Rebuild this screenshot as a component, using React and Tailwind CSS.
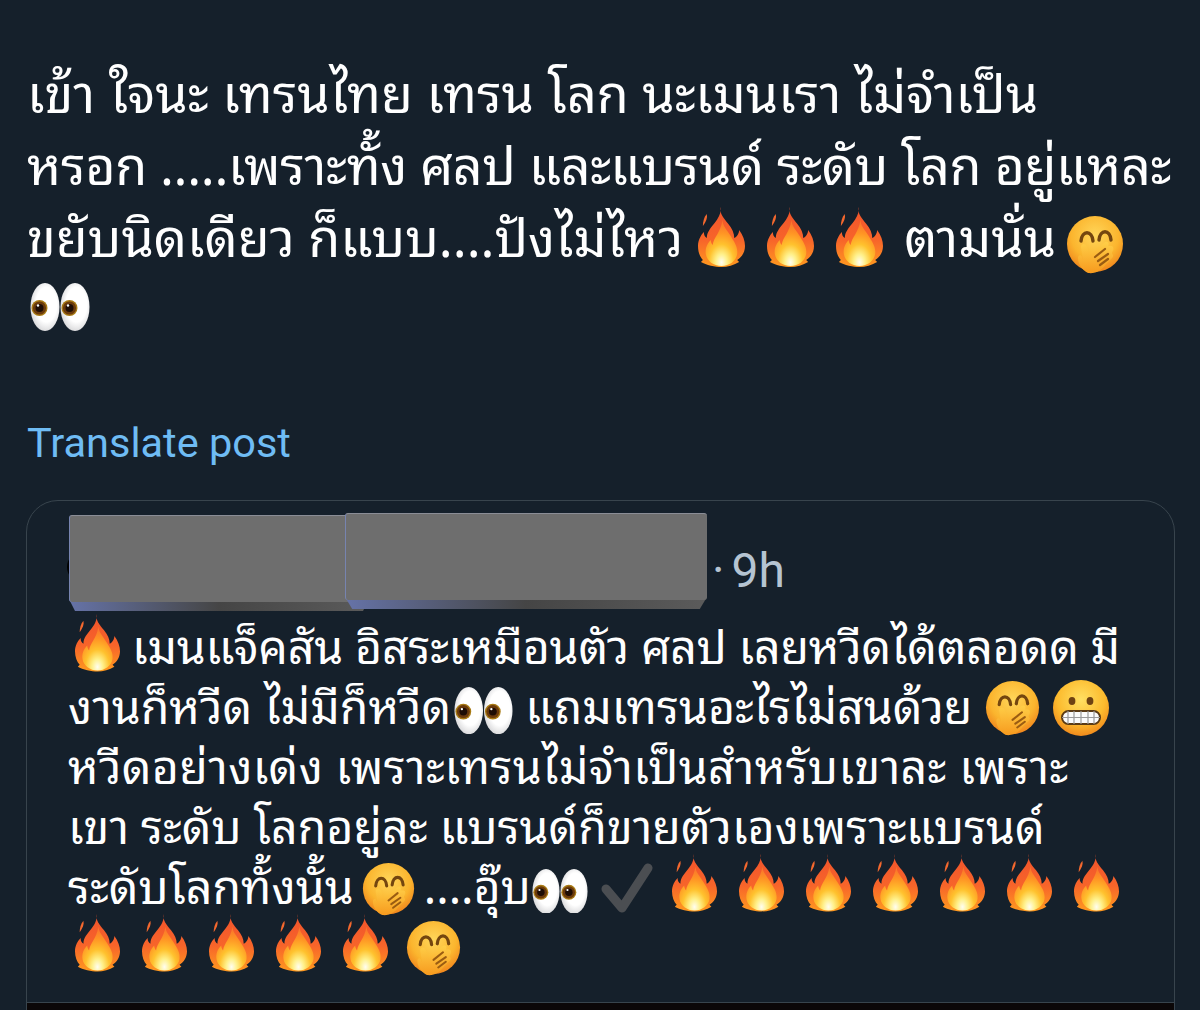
import React from "react";

const font = "[font-family:'Noto_Sans_Thai_Looped','Noto_Sans_Thai','Noto_Sans','Liberation_Sans',sans-serif]";

function Fire({ w = 45 }) {
  return (
    <svg viewBox="0 0 48 60" width={w} height={(w * 60) / 47} preserveAspectRatio="none" className="inline-block align-middle shrink-0">
      <defs>
        <linearGradient id="fireOuter" x1="0" y1="0" x2="0" y2="1">
          <stop offset="0%" stopColor="#f0532b" />
          <stop offset="55%" stopColor="#f7642a" />
          <stop offset="100%" stopColor="#ff9a1f" />
        </linearGradient>
        <radialGradient id="fireInner" cx="50%" cy="92%" r="82%">
          <stop offset="0%" stopColor="#fffdf0" />
          <stop offset="22%" stopColor="#fff08a" />
          <stop offset="48%" stopColor="#ffc22e" />
          <stop offset="78%" stopColor="#ff9424" />
          <stop offset="100%" stopColor="#fb7a2a" />
        </radialGradient>
      </defs>
      <path d="M23 0c-1 7 3 11 8 17 4 5 6 9 6 14 3-1 5-5 5-8 4 5 6 11 6 16 0 6-3 11-8 14l2 2c-5 3-12 5-18 5S8 58 3 55l2-2C2 50 0 45 0 39c0-6 3-11 6-14 0 3 1 5 3 6 0-6 4-10 8-15 4-5 7-10 6-16z" fill="url(#fireOuter)" />
      <path d="M9 7c1 4-1 8-4 12 0-4 1-9 4-12z" fill="#f4682e" />
      <path d="M25 13c0 6 5 10 9 17 3 5 7 10 6 17-1 7-8 12-16 12S9 54 8 47c-1-6 2-11 5-14 0 2 1 4 2 5 1-8 8-12 10-25z" fill="url(#fireInner)" />
    </svg>
  );
}

function Hush({ size = 58 }) {
  return (
    <svg viewBox="0 0 58 58" width={size} height={size} className="inline-block align-middle shrink-0">
      <defs>
        <radialGradient id="hushFace" cx="50%" cy="35%" r="68%">
          <stop offset="0%" stopColor="#ffd65a" />
          <stop offset="62%" stopColor="#fbb52e" />
          <stop offset="100%" stopColor="#ef7f1a" />
        </radialGradient>
        <linearGradient id="hushHand" x1="0" y1="0" x2="0" y2="1">
          <stop offset="0%" stopColor="#ffcf48" />
          <stop offset="100%" stopColor="#f79a1e" />
        </linearGradient>
      </defs>
      <circle cx="29" cy="28" r="28" fill="url(#hushFace)" />
      <path d="M15 25c1-11 11-11 12 0M33 24c1-11 11-11 12 0" fill="none" stroke="#74460f" strokeWidth="3.4" strokeLinecap="round" />
      <path d="M22 57c-6-3-10-9-10-15 0-3 3-4 4-1l1 3-2-13c0-4 5-4 6 0l3 8 14-12c3-3 6 0 4 3h3c3 0 3 4 1 6v2c2 1 1 4-1 5l-5 5c-4 6-10 10-18 9z" fill="url(#hushHand)" />
      <path d="M29 41l10-8M32 45l10-7M34 49l8-6" stroke="#9a5c12" strokeWidth="2.2" strokeLinecap="round" />
    </svg>
  );
}

function Grin({ size = 56 }) {
  return (
    <svg viewBox="0 0 56 56" width={size} height={size} className="inline-block align-middle shrink-0">
      <defs>
        <radialGradient id="grinFace" cx="50%" cy="35%" r="68%">
          <stop offset="0%" stopColor="#ffe063" />
          <stop offset="62%" stopColor="#fcbb2e" />
          <stop offset="100%" stopColor="#ef841a" />
        </radialGradient>
      </defs>
      <circle cx="28" cy="28" r="28" fill="url(#grinFace)" />
      <ellipse cx="19" cy="21" rx="3.4" ry="4" fill="#6e4212" />
      <ellipse cx="37" cy="21" rx="3.4" ry="4" fill="#6e4212" />
      <rect x="9" y="31" width="38" height="13" rx="6.5" fill="#fbfbfb" stroke="#5a3a14" strokeWidth="2" />
      <path d="M9 37.5h38M15 31v13M21 31v13M28 31v13M35 31v13M41 31v13" stroke="#9a9a9a" strokeWidth="1.2" />
    </svg>
  );
}

function Eyes({ size = 60 }) {
  return (
    <svg viewBox="0 0 60 48" width={size} height={(size * 48) / 60} className="inline-block align-middle shrink-0">
      <defs>
        <radialGradient id="eyeWhite" cx="55%" cy="45%" r="60%">
          <stop offset="60%" stopColor="#ffffff" />
          <stop offset="100%" stopColor="#d4d4d6" />
        </radialGradient>
      </defs>
      <ellipse cx="15" cy="24" rx="14.5" ry="24" fill="url(#eyeWhite)" />
      <ellipse cx="45" cy="24" rx="14.5" ry="24" fill="url(#eyeWhite)" />
      <circle cx="9.5" cy="25" r="8" fill="#a87a14" />
      <circle cx="39.5" cy="25" r="8" fill="#a87a14" />
      <circle cx="9.5" cy="25" r="6.6" fill="#6b3a0c" />
      <circle cx="39.5" cy="25" r="6.6" fill="#6b3a0c" />
      <circle cx="9.5" cy="25" r="4" fill="#1e0d04" />
      <circle cx="39.5" cy="25" r="4" fill="#1e0d04" />
      <circle cx="8" cy="22.5" r="1.2" fill="#fff" />
      <circle cx="38" cy="22.5" r="1.2" fill="#fff" />
    </svg>
  );
}

function Check() {
  return (
    <svg viewBox="0 0 54 54" width={54} height={54} className="inline-block align-middle shrink-0">
      <path d="M6 27l16 19L48 6" fill="none" stroke="#4b4e52" strokeWidth="9" strokeLinecap="round" strokeLinejoin="round" />
    </svg>
  );
}

function Redact({ w, top, extra }) {
  return (
    <div className={`relative h-[96px] shrink-0 ${extra}`} style={{ width: w, marginTop: top }}>
      <div className="absolute inset-x-0 bottom-0 h-3 bg-gradient-to-r from-[#6673a8] via-[#454545] to-[#5b5b5b] [clip-path:polygon(0_0,100%_0,98%_100%,2%_100%)]" />
      <div className="absolute inset-x-0 top-0 h-[87px] rounded-[3px] bg-[#6e6e6e] border-l border-t border-l-[#7784b0] border-t-[#8a8d96]" />
    </div>
  );
}

export default function App() {
  return (
    <div className={`w-[1200px] h-[1010px] overflow-hidden bg-[#15202b] text-white ${font}`}>
      <div className="pl-[27px] pt-[54px]">
        <div className="text-[52px] leading-[72px] whitespace-nowrap">
          <div>เข้า ใจนะ เทรนไทย เทรน โลก นะเมนเรา ไม่จำเป็น</div>
          <div className="tracking-[-0.35px]">หรอก .....เพราะทั้ง ศลป และแบรนด์ ระดับ โลก อยู่แหละ</div>
          <div className="flex items-center h-[72px]">
            <span>ขยับนิดเดียว ก็แบบ....ปังไม่ไหว</span>
            <span className="ml-[15px] mt-[6px] flex gap-[22px]"><Fire w={47} /><Fire w={47} /><Fire w={47} /></span>
            <span className="ml-[21px]">ตามนั่น</span>
            <span className="ml-[10px] mt-[6px]"><Hush /></span>
          </div>
          <div className="flex items-center h-[74px] pl-[3px]"><Eyes /></div>
        </div>
        <div className="mt-[75px] text-[41.5px] leading-[48px] text-[#6fbcf4] font-['Roboto',sans-serif]">Translate post</div>
      </div>

      <div className="ml-[26px] mt-[33px] w-[1149px] h-[520px] rounded-t-[32px] border border-[#38444d] overflow-hidden">
        <div className="flex items-start pl-[42px] pt-[12px] relative">
          <div className="absolute left-[40px] top-[50px] w-8 h-8 rounded-full bg-black" />
          <Redact w={300} top={2} extra="z-0 -mr-[24px]" />
          <Redact w={362} top={0} extra="z-10" />
          <span className="ml-[5px] mt-[28px] text-[48px] leading-[60px] text-[#b5c4d2] font-['Roboto',sans-serif]">·<span className="-ml-[5px]"> </span>9h</span>
        </div>
        <div className="pl-[41px] pt-[2px] text-[46.5px] leading-[60px] whitespace-nowrap">
          <div className="flex items-center h-[60px] pl-[7px]"><Fire /><span className="ml-[12px] tracking-[-0.2px]">เมนแจ็คสัน อิสระเหมือนตัว ศลป เลยหวีดได้ตลอดด มี</span></div>
          <div className="flex items-center h-[60px]">
            <span>งานก็หวีด ไม่มีก็หวีด</span><span className="ml-[3px]"><Eyes size={59} /></span>
            <span className="ml-[12px]">แถมเทรนอะไรไม่สนด้วย</span><span className="ml-[13px]"><Hush size={55} /></span><span className="ml-[13px]"><Grin /></span>
          </div>
          <div className="tracking-[0.35px]">หวีดอย่างเด่ง เพราะเทรนไม่จำเป็นสำหรับเขาละ เพราะ</div>
          <div>เขา ระดับ โลกอยู่ละ แบรนด์ก็ขายตัวเองเพราะแบรนด์</div>
          <div className="flex items-center h-[60px]">
            <span>ระดับโลกทั้งนั้น</span><span className="ml-[8px]"><Hush size={53} /></span><span className="ml-[9px]">....อุ๊บ</span><span className="ml-[1px]"><Eyes size={56} /></span>
            <span className="ml-[12px]"><Check /></span>
            <span className="ml-[18px] flex gap-[22px]"><Fire /><Fire /><Fire /><Fire /><Fire /><Fire /><Fire /></span>
          </div>
          <div className="flex items-center h-[60px] gap-[22px] pl-[7px]">
            <Fire /><Fire /><Fire /><Fire /><Fire /><span className="-ml-[4px]"><Hush size={55} /></span>
          </div>
        </div>
        <div className="mt-[29px] h-[10px] bg-[#0b0708] border-t border-[#38444d]" />
      </div>
    </div>
  );
}
